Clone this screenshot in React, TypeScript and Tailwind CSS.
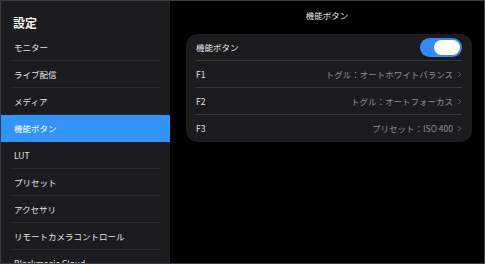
import { ChevronRight } from 'lucide-react';

// ─────────────────────────────────────────────
// Settings – 機能ボタン
// ─────────────────────────────────────────────

const menu = [
  'モニター',
  'ライブ配信',
  'メディア',
  '機能ボタン',
  'LUT',
  'プリセット',
  'アクセサリ',
  'リモートカメラコントロール',
  'Blackmagic Cloud',
];

const buttons = [
  { key: 'F1', value: 'トグル：オートホワイトバランス' },
  { key: 'F2', value: 'トグル：オートフォーカス' },
  { key: 'F3', value: 'プリセット：ISO 400' },
];

function Sidebar() {
  return (
    <div className="flex h-full w-[169px] shrink-0 flex-col overflow-hidden bg-[#1c1c1e]">
      <div className="h-[33px] shrink-0 px-[12px] pt-[14px] text-[12px] font-bold leading-[16px] text-[#f2f2f2]">
        設定
      </div>
      {menu.map((label) => {
        const active = label === '機能ボタン';
        return active ? (
          <div
            key={label}
            className="flex h-[27px] shrink-0 items-center bg-[#3294f9] pl-[13px] text-[8.5px] text-white"
          >
            {label}
          </div>
        ) : (
          <div key={label} className="shrink-0 px-[9px]">
            <div className="flex h-[27px] items-center border-b border-[#2a2a2c] pl-[4px] text-[8.5px] text-[#e4e4e6]">
              {label}
            </div>
          </div>
        );
      })}
    </div>
  );
}

function Toggle() {
  return (
    <div className="flex h-[19px] w-[42px] items-center justify-end rounded-full bg-[#2f8cf7] pr-[2px]">
      <div className="h-[15px] w-[26px] rounded-full bg-white" />
    </div>
  );
}

export default function App() {
  return (
    <div
      className="flex h-[264px] w-[485px] overflow-hidden border border-[#3c3c3e] bg-black"
      style={{ fontFamily: '"Noto Sans CJK JP", "Noto Sans", sans-serif' }}
    >
      <Sidebar />
      <div className="flex flex-1 flex-col">
        <div className="flex h-[33px] shrink-0 items-center justify-center pb-[4px] text-[8.5px] text-[#e4e4e6]">
          機能ボタン
        </div>
        <div className="ml-[16px] mr-[12px] rounded-[12px] bg-[#1c1c1e] px-[10px]">
          <div className="flex h-[27px] items-center justify-between border-b border-[#38383a] text-[8.5px] text-[#e4e4e6]">
            <span>機能ボタン</span>
            <Toggle />
          </div>
          {buttons.map((b, i) => (
            <div
              key={b.key}
              className={`flex h-[27px] items-center justify-between text-[8.5px] ${
                i < buttons.length - 1 ? 'border-b border-[#38383a]' : ''
              }`}
            >
              <span className="text-[#e4e4e6]">{b.key}</span>
              <span className="flex items-center gap-[2px] text-[#8e8e93]">
                {b.value}
                <ChevronRight size={9} strokeWidth={1.6} className="-mr-[2px] text-[#8e8e93]" />
              </span>
            </div>
          ))}
        </div>
      </div>
    </div>
  );
}
